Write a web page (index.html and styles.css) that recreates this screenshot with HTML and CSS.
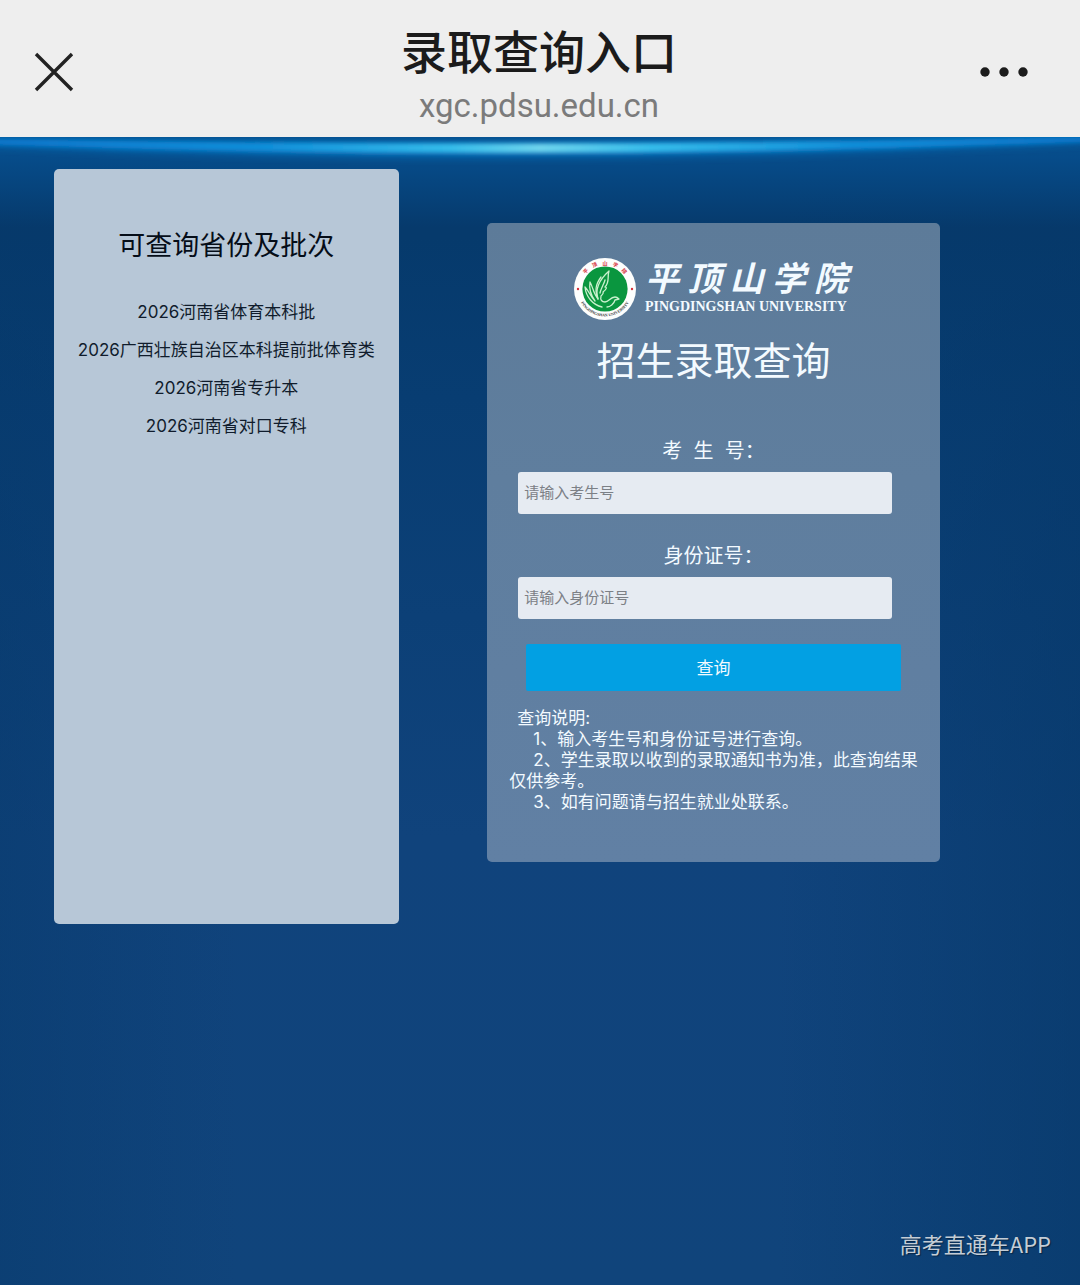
FILE: index.html
```html
<!DOCTYPE html>
<html lang="zh-CN">
<head>
<meta charset="utf-8">
<meta name="viewport" content="width=device-width, initial-scale=1">
<title>录取查询入口</title>
<link rel="stylesheet" href="styles.css">
</head>
<body>
<header class="topbar">
  <button class="icon-button" type="button" aria-label="关闭">
    <svg class="icon" viewBox="0 0 48 48" aria-hidden="true"><path d="M6 6 42 42M42 6 6 42" fill="none" stroke="#222" stroke-width="3.4"/></svg>
  </button>
  <div class="topbar-text">
    <h1 class="topbar-title">录取查询入口</h1>
    <p class="topbar-url">xgc.pdsu.edu.cn</p>
  </div>
  <button class="icon-button" type="button" aria-label="更多">
    <svg class="icon" viewBox="0 0 48 48" aria-hidden="true"><g fill="#1c1c1c"><circle cx="5" cy="24" r="4.7"/><circle cx="24" cy="24" r="4.7"/><circle cx="43" cy="24" r="4.7"/></g></svg>
  </button>
</header>
<main class="page">
  <svg class="glow" viewBox="0 0 1080 60" preserveAspectRatio="none" aria-hidden="true">
    <defs>
      <linearGradient id="beam">
        <stop offset="0" stop-color="#0878cf"/>
        <stop offset=".25" stop-color="#0f8fda"/>
        <stop offset=".42" stop-color="#35bdeb"/>
        <stop offset=".5" stop-color="#6fd6ee"/>
        <stop offset=".6" stop-color="#35bdeb"/>
        <stop offset=".78" stop-color="#0f8fda"/>
        <stop offset="1" stop-color="#0878cf"/>
      </linearGradient>
      <filter id="wide" x="-5%" y="-200%" width="110%" height="500%"><feGaussianBlur stdDeviation="5"/></filter>
      <filter id="fine" x="-5%" y="-200%" width="110%" height="500%"><feGaussianBlur stdDeviation="2"/></filter>
    </defs>
    <path d="M-20 2Q540 14 1100-2L1100 3Q540 32 -20 7Z" fill="#0a79c8" filter="url(#wide)"/>
    <path d="M-20 2Q540 12 1100 0L1100 4Q540 26 -20 7Z" fill="url(#beam)" filter="url(#fine)"/>
  </svg>
  <section class="batches">
    <h2 class="batches-title">可查询省份及批次</h2>
    <ul class="batch-list">
      <li>2026河南省体育本科批</li>
      <li>2026广西壮族自治区本科提前批体育类</li>
      <li>2026河南省专升本</li>
      <li>2026河南省对口专科</li>
    </ul>
  </section>
  <section class="query">
    <div class="brand">
      <svg class="emblem" viewBox="0 0 64 64" aria-hidden="true">
        <defs>
          <path id="arc-top" d="M7.500 32a24.500 24.500 0 0 1 49 0"/>
          <path id="arc-bottom" d="M4.500 32a27.500 27.500 0 0 0 55 0"/>
        </defs>
        <circle cx="32" cy="32" r="31" fill="#fdfefd"/>
        <circle cx="32" cy="32" r="22.600" fill="#0a963f"/>
        <g fill="#d5303a"><circle cx="5" cy="32" r="1.200"/><circle cx="59" cy="32" r="1.200"/></g>
        <text class="seal-cn"><textPath href="#arc-top" startOffset="50%">平&#8195;顶&#8195;山&#8195;学&#8195;院</textPath></text>
        <text class="seal-en"><textPath href="#arc-bottom" startOffset="50%">PINGDINGSHAN UNIVERSITY</textPath></text>
        <g fill="none" stroke="#c9f0cd" stroke-width="1.300" stroke-linecap="round" stroke-linejoin="round">
          <path d="M29 50C20 48 13 40 12 30c4 4 5 9 10 14-5-7-6-13-5-19 3 5 3 11 8 17-3-8-3-14 3-22"/>
          <path d="M25 42C22 33 26 23 36 14c-2 6 1 11-4 16 2 0 2 2-2 5 1 1 0 2-2 4-1 4 1 6 4 6 4 0 5-5 10-5 2 0 3 1 4 2l-4 1c-1 4-5 7-8 7"/>
          <path d="M27 36c1-5 4-9 5-13"/>
        </g>
      </svg>
      <div class="brand-text">
        <div class="brand-cn"><span>平</span><span>顶</span><span>山</span><span>学</span><span>院</span></div>
        <div class="brand-en">PINGDINGSHAN UNIVERSITY</div>
      </div>
    </div>
    <h2 class="query-title">招生录取查询</h2>
    <form class="query-form">
      <label class="field-label" for="exam-no">考&nbsp; 生&nbsp; 号：</label>
      <input class="field" id="exam-no" type="text" placeholder="请输入考生号">
      <label class="field-label" for="id-no">身份证号：</label>
      <input class="field" id="id-no" type="text" placeholder="请输入身份证号">
      <button class="submit" type="submit">查询</button>
    </form>
    <div class="notes">
      <p class="notes-title">查询说明:</p>
      <p class="note">1、输入考生号和身份证号进行查询。</p>
      <p class="note">2、学生录取以收到的录取通知书为准，此查询结果仅供参考。</p>
      <p class="note">3、如有问题请与招生就业处联系。</p>
    </div>
  </section>
</main>
<footer class="watermark">高考直通车APP</footer>
</body>
</html>
```
FILE: styles.css
```css
* { box-sizing: border-box; }
h1, h2, p, ul { margin: 0; padding: 0; font-weight: 400; }

body {
  margin: 0;
  min-height: 100vh;
  display: flex;
  flex-direction: column;
  font-family: Inter, "Noto Sans CJK SC", sans-serif;
  font-size: 17px;
  background: #0f437a;
}

.topbar {
  display: flex;
  align-items: center;
  justify-content: space-between;
  height: 137px;
  padding: 7px 52px 0 30px;
  background: #eee;
}
.icon-button {
  width: 48px;
  height: 48px;
  padding: 0;
  border: 0;
  background: none;
}
.icon { display: block; width: 48px; height: 48px; overflow: visible; }
.topbar-text { padding: 15px 0 7px 20px; text-align: center; }
.topbar-title { font-size: 46px; line-height: 60px; font-weight: 500; color: #1b1b1b; }
.topbar-url { font-family: Roboto, sans-serif; font-size: 33px; line-height: 48px; color: #7b7b7b; }

.page {
  position: relative;
  flex: 1;
  display: flex;
  align-items: flex-start;
  gap: 10%;
  padding: 32px 13% 0 5%;
  overflow: hidden;
  background:
    linear-gradient(#06508f, #064c8a 20px, #06427c00 90px),
    linear-gradient(90deg, #06386966, #06386900 22%, #06386900 72%, #06386999),
    linear-gradient(#063a6c, #063a6c 100px, #083d72 260px, #10437c 700px, #10447b);
}
.glow {
  position: absolute;
  top: 0;
  left: 0;
  width: 100%;
  height: 60px;
}

.batches {
  flex: 346 1 0;
  min-height: 755px;
  padding-top: 58px;
  border-radius: 5px;
  background: #b7c7d7;
  color: #101c2c;
  text-align: center;
}
.batches-title { font-size: 27px; line-height: 38px; color: #050d18; }
.batch-list { margin-top: 28px; list-style: none; line-height: 38px; white-space: nowrap; }

.query {
  flex: 454 1 0;
  min-height: 639px;
  margin-top: 54px;
  padding-top: 34px;
  border-radius: 5px;
  background: linear-gradient(#5d7b99, #5f7e9e 40%, #6180a4);
  color: #f3faff;
}
.brand { display: flex; justify-content: center; align-items: center; gap: 8px; padding-right: 6px; }
.emblem { width: 64px; height: 64px; }
.seal-cn { font-size: 5px; font-weight: 700; fill: #d5303a; text-anchor: middle; }
.seal-en { font: 700 4px "Liberation Serif", serif; fill: #333; text-anchor: middle; }
.brand-text { width: 203px; }
.brand-cn {
  display: flex;
  justify-content: space-between;
  font-size: 34px;
  line-height: 36px;
  font-weight: 700;
  font-style: italic;
}
.brand-en { font: 700 14px/20px "Liberation Serif", serif; white-space: nowrap; }
.query-title { margin-top: 14px; font-size: 39px; line-height: 52px; text-align: center; }

.query-form { display: flex; flex-direction: column; margin-top: 47px; }
.field-label { font-size: 20px; line-height: 34px; text-align: center; }
.field {
  height: 42px;
  margin: 4px 48px 25px 31px;
  padding: 0 6px 2px;
  border: 0;
  border-radius: 3px;
  background: #e6ebf2;
  font: inherit;
  font-size: 15px;
}
.field::placeholder { color: #7c8086; opacity: 1; }
.submit {
  height: 47px;
  margin: 0 39px;
  padding: 0 0 2px;
  border: 0;
  border-radius: 2px;
  background: #02a0e3;
  color: #f3faff;
  font: inherit;
}
.notes { padding: 17px 10px 40px 22px; line-height: 21px; }
.notes-title { padding-left: 8px; }
.note { text-indent: 24px; }

.watermark {
  position: absolute;
  right: 29px;
  bottom: 26px;
  font-family: "Noto Sans CJK SC", sans-serif;
  font-size: 22px;
  line-height: 32px;
  color: #c4cdd6;
  text-shadow: 1px 1px 1px #0006;
}
```
